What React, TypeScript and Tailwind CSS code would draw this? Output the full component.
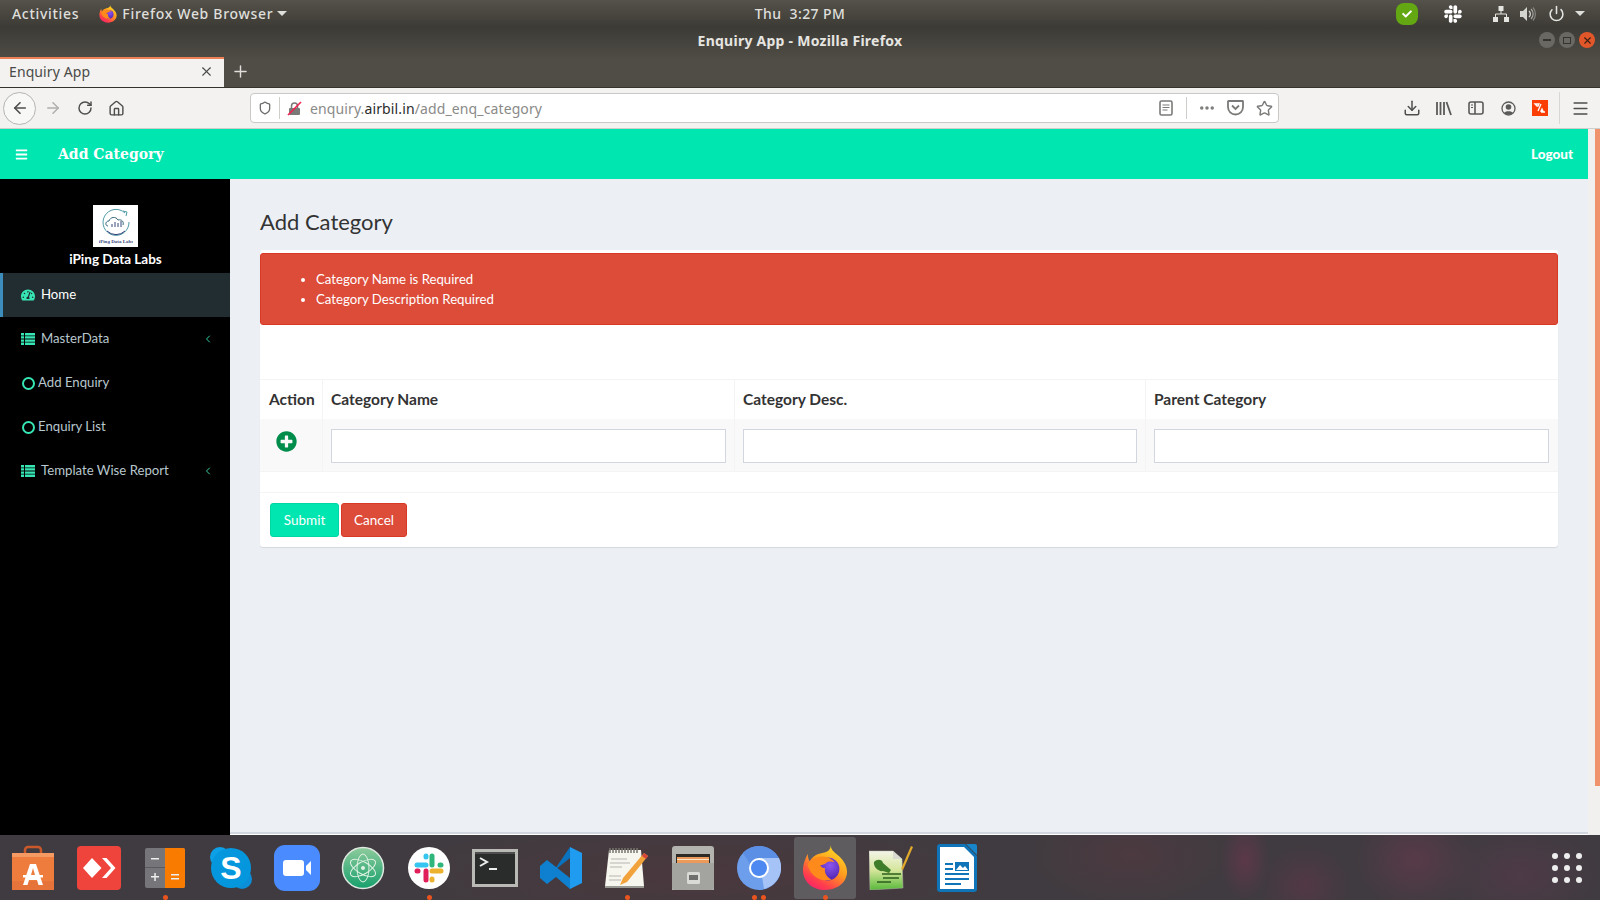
import React from "react";
import { FaBars, FaTachometerAlt, FaPlusCircle, FaSlack, FaCheck } from "react-icons/fa";
import { ArrowLeft, ArrowRight, RotateCw, House, Shield, X, Plus, Ellipsis, Star, Download, Menu, Power, ChevronLeft } from "lucide-react";

const ui = "font-['Noto_Sans',sans-serif]";
const page = "font-['Lato',sans-serif]";

function Firefox({ size }: { size: number }) {
  return (
    <svg width={size} height={size} viewBox="0 0 48 48">
      <defs>
        <linearGradient id="ffa" x1="0.8" y1="0" x2="0.2" y2="1">
          <stop offset="0" stopColor="#ffe226" />
          <stop offset="0.45" stopColor="#ff9a1f" />
          <stop offset="0.8" stopColor="#ff3d4d" />
          <stop offset="1" stopColor="#f5206e" />
        </linearGradient>
        <radialGradient id="ffb" cx="0.6" cy="0.35" r="0.7">
          <stop offset="0" stopColor="#8c55f0" />
          <stop offset="1" stopColor="#4a1fa8" />
        </radialGradient>
      </defs>
      <path d="M30 0c0 6 5 8 9 12 5 5 8 10 8 16 0 11-10 19-23 19C11 47 1 38 1 26 1 20 3 15 6 9c0 4 1 6 2 8 2-4 6-7 10-8 6-1 12-2 12-9z" fill="url(#ffa)" />
      <circle cx="27" cy="25" r="12" fill="url(#ffb)" />
      <path d="M6 20c3-5 9-8 15-8 6 0 11 3 13 6-3-1-7-1-9 1-2 1-3 2-6 2 1 2 3 3 5 3-1 5 2 10 7 12-9 3-19-2-23-10-1-2-2-4-2-6z" fill="#ff8a1c" />
    </svg>
  );
}

function SoftwareIcon() {
  return (
    <svg width="44" height="46" viewBox="0 0 44 46">
      <path d="M14 10V5a3 3 0 0 1 3-3h10a3 3 0 0 1 3 3v5" fill="none" stroke="#c9592a" strokeWidth="2.5" />
      <rect x="1" y="8" width="42" height="37" fill="#ee7d3d" />
      <rect x="1" y="8" width="42" height="4" fill="#f59a63" />
      <rect x="1" y="36" width="42" height="9" fill="#e5733a" />
      <path d="M19 19h6l7 21h-4.500l-1.500-5h-8l-1.500 5H12zM20 30h4l-2-7z" fill="#fff" />
      <rect x="12" y="30" width="20" height="2.5" fill="#fff" />
    </svg>
  );
}
function AnyDeskIcon() {
  return (
    <svg width="44" height="44" viewBox="0 0 44 44">
      <rect width="44" height="44" rx="4" fill="#ef443b" />
      <path d="M15 12l9.500 10L15 32 6 22z" fill="#fff" />
      <path d="M25 12l9 10-9 10h4.500l9-10-9-10z" fill="#fff" />
    </svg>
  );
}
function CalcIcon() {
  return (
    <svg width="40" height="40" viewBox="0 0 40 40">
      <rect width="40" height="40" rx="2" fill="#76767a" />
      <path d="M20 0h18a2 2 0 0 1 2 2v36a2 2 0 0 1-2 2H20z" fill="#f97c00" />
      <rect y="19" width="20" height="1" fill="#5b5b5f" />
      <path d="M6 10h8v1.500H6zM6 28h8v1.500H6zM9.300 25h1.500v8H9.300zM26 26h8v1.500h-8zM26 30h8v1.500h-8z" fill="#eee" />
    </svg>
  );
}
function SkypeIcon() {
  return (
    <svg width="44" height="44" viewBox="0 0 44 44">
      <circle cx="11" cy="11" r="10" fill="#0ea0e6" />
      <circle cx="33" cy="33" r="10" fill="#0b8fd8" />
      <circle cx="22" cy="22" r="20" fill="#0597dd" />
      <text x="22" y="33" textAnchor="middle" fontFamily="Liberation Sans, sans-serif" fontWeight="700" fontSize="32" fill="#fff">S</text>
    </svg>
  );
}
function ZoomIcon() {
  return (
    <svg width="46" height="46" viewBox="0 0 46 46">
      <rect width="46" height="46" rx="11" fill="#4a8cff" />
      <rect x="9" y="15" width="21" height="16" rx="3" fill="#fff" />
      <path d="M32 21l5-5v14l-5-5z" fill="#fff" />
    </svg>
  );
}
function AtomIcon() {
  return (
    <svg width="44" height="44" viewBox="0 0 44 44">
      <defs>
        <linearGradient id="atm" x1="0" y1="0" x2="0" y2="1">
          <stop offset="0" stopColor="#8ecb9c" />
          <stop offset="1" stopColor="#16a06c" />
        </linearGradient>
      </defs>
      <circle cx="22" cy="22" r="20.500" fill="url(#atm)" stroke="#dfe8e0" strokeWidth="1.500" />
      <g fill="none" stroke="#e3f3e6" strokeWidth="1">
        <ellipse cx="22" cy="22" rx="14" ry="6" transform="rotate(30 22 22)" />
        <ellipse cx="22" cy="22" rx="14" ry="6" transform="rotate(-30 22 22)" />
        <ellipse cx="22" cy="22" rx="14" ry="6" transform="rotate(90 22 22)" />
      </g>
      <circle cx="22" cy="22" r="2" fill="#e3f3e6" />
    </svg>
  );
}
function SlackIcon() {
  return (
    <svg width="42" height="42" viewBox="0 0 42 42">
      <circle cx="21" cy="21" r="21" fill="#fff" />
      <g strokeWidth="5" strokeLinecap="round" fill="none">
        <path d="M9 18h9" stroke="#36c5f0" />
        <path d="M18 9v1" stroke="#36c5f0" />
        <path d="M24 9v9" stroke="#2eb67d" />
        <path d="M33 18h-1" stroke="#2eb67d" />
        <path d="M24 24h9" stroke="#ecb22e" />
        <path d="M24 33v-1" stroke="#ecb22e" />
        <path d="M18 24v9" stroke="#e01e5a" />
        <path d="M9 24h1" stroke="#e01e5a" />
      </g>
    </svg>
  );
}
function TerminalIcon() {
  return (
    <svg width="46" height="38" viewBox="0 0 46 38">
      <rect width="46" height="38" fill="#b9b9b6" />
      <rect x="3" y="3" width="40" height="32" fill="#2a2b2b" />
      <rect x="3" y="3" width="40" height="2" fill="#4d4e4d" />
      <path d="M8 9l7 4-7 4" fill="none" stroke="#eee" strokeWidth="2" />
      <rect x="17" y="19" width="8" height="2" fill="#eee" />
    </svg>
  );
}
function VSCodeIcon() {
  return (
    <svg width="44" height="44" viewBox="0 0 44 44">
      <path d="M31 1l12 6v30l-12 6z" fill="#1f9cf0" />
      <path d="M31 1v11L16 24l-8 6-7-6 7-6 8 5z" fill="#0b72bd" />
      <path d="M1 20l7-6 23 18v11l-14-12-9 7-7-6z" fill="#0f80cf" />
    </svg>
  );
}
function GeditIcon() {
  return (
    <svg width="46" height="44" viewBox="0 0 46 44">
      <path d="M5 4h32l3 36H1z" fill="#f6f5ee" />
      <path d="M1 40h39v2H1z" fill="#9a9a94" />
      <path d="M6 2v5M9 2v5M12 2v5M15 2v5M18 2v5M21 2v5M24 2v5M27 2v5M30 2v5M33 2v5" stroke="#77776f" strokeWidth="1.500" />
      <path d="M7 13h16M6 17h20M6 21h12M5 30h12M5 34h12" stroke="#b5b5b0" strokeWidth="1.200" />
      <path d="M40 7l4 3-21 26-7 3 3-7z" fill="#f2a23a" />
      <path d="M40 7l4 3-2 3-4-3z" fill="#d8453a" />
    </svg>
  );
}
function FilesIcon() {
  return (
    <svg width="42" height="44" viewBox="0 0 42 44">
      <path d="M0 3a3 3 0 0 1 3-3h36a3 3 0 0 1 3 3v41H0z" fill="#b3b3b0" />
      <rect x="4" y="8" width="34" height="10" fill="#2d2a26" />
      <rect x="5" y="11" width="32" height="6" fill="#ec9a5b" />
      <rect x="5" y="13" width="32" height="1" fill="#fbe5c5" />
      <path d="M0 17h42v24a3 3 0 0 1-3 3H3a3 3 0 0 1-3-3z" fill="#a3a3a0" />
      <rect x="15" y="26" width="13" height="12" rx="1.500" fill="#d9d9d6" />
      <rect x="17" y="29" width="9" height="5" fill="#6f6f6d" />
    </svg>
  );
}
function ChromiumIcon() {
  return (
    <svg width="44" height="44" viewBox="0 0 44 44">
      <circle cx="22" cy="22" r="22" fill="#6d9eeb" />
      <path d="M22 12h20a22 22 0 0 1-15 31z" fill="#a5c3f7" />
      <path d="M22 0a22 22 0 0 1 20 12H22a10 10 0 0 0-9 6L6 7A22 22 0 0 1 22 0z" fill="#5b8fe6" />
      <circle cx="22" cy="22" r="10" fill="#fff" />
      <circle cx="22" cy="22" r="8" fill="#4d89f0" />
    </svg>
  );
}
function NotepadqqIcon() {
  return (
    <svg width="44" height="44" viewBox="0 0 44 44">
      <defs>
        <linearGradient id="nq" x1="0" y1="0" x2="0" y2="1">
          <stop offset="0" stopColor="#f4f5e8" />
          <stop offset="0.5" stopColor="#d4e59a" />
          <stop offset="1" stopColor="#58b93a" />
        </linearGradient>
      </defs>
      <path d="M0 5h24l9 8 1 29-33 2z" fill="url(#nq)" stroke="#b9b9b0" strokeWidth="0.500" />
      <path d="M24 5v8h9z" fill="#d9d9d0" />
      <path d="M5 16c3-3 8-3 9 1l8 7-2 3-6-2c-4 1-10-4-9-9z" fill="#3f7d2a" />
      <path d="M13 28h19M14 32h16M8 36h14" stroke="#2c5e1c" strokeWidth="1.500" />
      <path d="M42 0l2 1-10 23-2-1z" fill="#e3a92a" />
    </svg>
  );
}
function WriterIcon() {
  return (
    <svg width="40" height="48" viewBox="0 0 40 48">
      <path d="M3 0h25l12 12v33a3 3 0 0 1-3 3H3a3 3 0 0 1-3-3V3a3 3 0 0 1 3-3z" fill="#0f75b8" />
      <path d="M3 3h24l10 10v32H3z" fill="#fff" />
      <path d="M29 0l11 11V2a2 2 0 0 0-2-2z" fill="#1685c9" />
      <path d="M8 19h8v2H8zM8 24h8v2H8zM8 29h24v2H8zM8 34h24v2H8zM8 39h16v2H8z" fill="#0f75b8" />
      <rect x="18" y="18" width="14" height="9" fill="#0f75b8" />
      <path d="M19 26l4-5 3 3 2-2 3 4z" fill="#fff" />
    </svg>
  );
}

function ListIcon() {
  return (
    <svg width="14" height="12" viewBox="0 0 14 12" fill="#36e6b4">
      <path d="M0 0h3v2.400H0zM4 0h10v2.400H4zM0 3.200h3v2.400H0zM4 3.200h10v2.400H4zM0 6.400h3v2.400H0zM4 6.400h10v2.400H4zM0 9.600h3V12H0zM4 9.600h10V12H4z" />
    </svg>
  );
}

function Logo() {
  return (
    <div className="w-[45px] h-[42px] bg-white flex flex-col items-center justify-start pt-[2px]">
      <svg width="34" height="30" viewBox="0 0 34 30">
        <path d="M26 6a13 13 0 1 0 4 9" fill="none" stroke="#4d9aa6" strokeWidth="1" />
        <path d="M24 4l4 1-1 4" fill="none" stroke="#4d9aa6" strokeWidth="1" />
        <path d="M9 19c-3 0-3-5 1-5 1-4 7-5 9-1 4-1 6 2 5 5" fill="none" stroke="#35687a" strokeWidth="1" />
        <path d="M13 20v-3M16 20v-5M19 20v-4M22 20v-6" stroke="#35487a" strokeWidth="1" />
        <path d="M8 24a13 13 0 0 0 18 0" fill="none" stroke="#33407a" strokeWidth="1" />
      </svg>
      <svg width="34" height="7" viewBox="0 0 34 7">
        <text x="17" y="5.500" textAnchor="middle" fontFamily="Liberation Serif, serif" fontSize="5" fontWeight="700" fill="#3d4a80">iPing Data Labs</text>
      </svg>
    </div>
  );
}

const menu = [
  { label: "Home", icon: "gauge", active: true },
  { label: "MasterData", icon: "list", chevron: true },
  { label: "Add Enquiry", icon: "circle" },
  { label: "Enquiry List", icon: "circle" },
  { label: "Template Wise Report", icon: "list", chevron: true },
];

const dock = [
  { el: <SoftwareIcon /> },
  { el: <AnyDeskIcon /> },
  { el: <CalcIcon />, dots: 1 },
  { el: <SkypeIcon /> },
  { el: <ZoomIcon /> },
  { el: <AtomIcon /> },
  { el: <SlackIcon />, dots: 1 },
  { el: <TerminalIcon /> },
  { el: <VSCodeIcon /> },
  { el: <GeditIcon />, dots: 1 },
  { el: <FilesIcon /> },
  { el: <ChromiumIcon />, dots: 2 },
  { el: <Firefox size={46} />, dots: 1, active: true },
  { el: <NotepadqqIcon /> },
  { el: <WriterIcon /> },
];

function Slot({ children, w = "w-[32px]" }: { children: React.ReactNode; w?: string }) {
  return <div className={`${w} h-[32px] flex items-center justify-center shrink-0`}>{children}</div>;
}

export default function App() {
  return (
    <div className="w-[1600px] h-[900px] flex flex-col overflow-hidden bg-[#ecf0f5]">
      <div className={`h-[88px] shrink-0 flex flex-col bg-[linear-gradient(#55524b_0px,#3d3b35_27px,#44423c_40px,#504d46_60px,#504d46_88px)] border-b border-[#35332e] ${ui}`}>
        <div className="h-[27px] grid grid-cols-[1fr_auto_1fr] items-center text-[14px] font-medium text-[#dfdfdb]">
          <div className="flex items-center tracking-[0.7px]">
            <span className="ml-[12px]">Activities</span>
            <span className="ml-[20px] flex"><Firefox size={18} /></span>
            <span className="ml-[5px]">Firefox Web Browser</span>
            <span className="ml-[4px] w-0 h-0 border-x-[5px] border-x-transparent border-t-[5px] border-t-[#dfdfdb]" />
          </div>
          <div className="whitespace-pre tracking-[0.4px]">Thu  3:27 PM</div>
          <div className="flex items-center justify-end pr-[15px]">
            <span className="w-[22px] h-[22px] rounded-[8px] bg-[#63a812] flex items-center justify-center text-white"><FaCheck size={10} /></span>
            <span className="ml-[25px] flex text-white"><FaSlack size={20} /></span>
            <span className="ml-[30px] flex">
              <svg width="16" height="16" viewBox="0 0 16 16"><path d="M5.500 0h5v5h-5zM0 11h5v5H0zM11 11h5v5h-5z" fill="#e4e4e0" /><path d="M8 5v3M2.500 11V8h11v3" fill="none" stroke="#e4e4e0" strokeWidth="1" /></svg>
            </span>
            <span className="ml-[11px] flex">
              <svg width="16" height="16" viewBox="0 0 16 16"><path d="M0 5h3l4-4v14l-4-4H0z" fill="#d5d5d0" /><path d="M9 5a4 4 0 0 1 0 6" fill="none" stroke="#d5d5d0" strokeWidth="1.300" /><path d="M11 3a7 7 0 0 1 0 10" fill="none" stroke="#a9a8a3" strokeWidth="1.200" /><path d="M13 1.500a10 10 0 0 1 0 13" fill="none" stroke="#85847f" strokeWidth="1.200" /></svg>
            </span>
            <span className="ml-[12px] flex text-[#e4e4e0]"><Power size={17} strokeWidth={2.200} /></span>
            <span className="ml-[10px] w-0 h-0 border-x-[5px] border-x-transparent border-t-[5px] border-t-[#dfdfdb]" />
          </div>
        </div>
        <div className="h-[30px] grid grid-cols-[1fr_auto_1fr] items-center">
          <div />
          <div className="text-[14px] font-bold text-[#e6e5e1] tracking-[0.25px] pb-[4px]">Enquiry App - Mozilla Firefox</div>
          <div className="flex justify-end gap-[4px] pr-[5px] pb-[4px]">
            <span className="w-[16px] h-[16px] rounded-full bg-[#6a6862] flex items-center justify-center"><span className="w-[8px] h-[1.500px] bg-[#35332e]" /></span>
            <span className="w-[16px] h-[16px] rounded-full bg-[#6a6862] flex items-center justify-center"><span className="w-[8px] h-[7px] border border-[#35332e]" /></span>
            <span className="w-[16px] h-[16px] rounded-full bg-[#e2572a] flex items-center justify-center text-[#3d2015]"><X size={11} strokeWidth={2.500} /></span>
          </div>
        </div>
        <div className="flex-1 flex items-stretch">
          <div className="w-[224px] bg-[#f3f2f0] border-t-[2px] border-t-[#ef7f55] flex items-center justify-between pl-[9px] pr-[10px] pb-[3px] text-[14px] text-[#4a4a48] tracking-[0.1px]">
            <span>Enquiry App</span>
            <X size={15} strokeWidth={1.800} />
          </div>
          <div className="w-[32px] flex items-center justify-center pb-[2px] text-[#e0dfdb]"><Plus size={19} strokeWidth={1.800} /></div>
        </div>
      </div>

      <div className={`h-[40px] shrink-0 bg-[#f3f2f0] border-b border-[#cfcecb] flex items-center text-[#4e4e4c] box-content ${ui}`}>
        <div className="ml-[3px] w-[33px] h-[33px] rounded-full border border-[#b5b4b2] bg-[#f8f8f7] flex items-center justify-center shrink-0"><ArrowLeft size={18} strokeWidth={2.200} /></div>
        <div className="ml-[1px]"><Slot><ArrowRight size={18} strokeWidth={2} className="text-[#b0afad]" /></Slot></div>
        <Slot><RotateCw size={16} strokeWidth={2.200} /></Slot>
        <div className="ml-[-1px]"><Slot><House size={17} strokeWidth={2} /></Slot></div>
        <div className="ml-[118px] w-[1029px] h-[30px] shrink-0 bg-white border border-[#c9c8c6] rounded-[4px] flex items-center">
          <div className="ml-[5px]"><Slot w="w-[18px]"><Shield size={14} strokeWidth={2.200} className="text-[#6b6b69]" /></Slot></div>
          <div className="ml-[5px] w-px h-[22px] bg-[#cfcecb]" />
          <div className="ml-[6px] w-[16px] h-[16px] flex items-center justify-center">
            <svg width="15" height="15" viewBox="0 0 15 15">
              <rect x="2" y="7" width="11" height="7" rx="1" fill="#7a7a78" />
              <path d="M4.500 7V5a3 3 0 0 1 6 0v2" fill="none" stroke="#7a7a78" strokeWidth="1.500" />
              <path d="M1 14L14 1" stroke="#f1224e" strokeWidth="1.600" />
            </svg>
          </div>
          <div className="ml-[8px] text-[14px] text-[#8a8a88] tracking-[0.12px]">enquiry.<span className="text-[#2b2b2b]">airbil.in</span>/add_enq_category</div>
          <div className="flex-1" />
          <Slot w="w-[16px]">
            <svg width="14" height="16" viewBox="0 0 14 16"><rect x="1" y="1" width="12" height="14" rx="1.500" fill="none" stroke="#7a7a78" strokeWidth="1.600" /><path d="M3.500 5h7M3.500 7.500h7M3.500 10h5" stroke="#7a7a78" strokeWidth="1.200" /></svg>
          </Slot>
          <div className="ml-[12px] w-px h-[22px] bg-[#cfcecb]" />
          <div className="ml-[10px] flex"><Slot w="w-[20px]"><Ellipsis size={18} strokeWidth={2.600} className="text-[#7a7a78]" /></Slot></div>
          <div className="ml-[9px]">
            <Slot w="w-[18px]">
              <svg width="17" height="16" viewBox="0 0 17 16"><path d="M1.500 1h14a0.500 0.500 0 0 1 0.500 0.500V7a7.500 7.500 0 0 1-15 0V1.500A0.500 0.500 0 0 1 1.500 1z" fill="none" stroke="#7a7a78" strokeWidth="1.800" /><path d="M5 5.500l3.500 3.500L12 5.500" fill="none" stroke="#7a7a78" strokeWidth="1.800" /></svg>
            </Slot>
          </div>
          <div className="ml-[11px] mr-[5px]"><Slot w="w-[18px]"><Star size={17} strokeWidth={2} className="text-[#7a7a78]" /></Slot></div>
        </div>
        <div className="ml-[117px]"><Slot><Download size={18} strokeWidth={2} /></Slot></div>
        <Slot>
          <svg width="16" height="15" viewBox="0 0 16 15"><path d="M1 1v13M4.500 1v13M8 1v13M10.500 1l4.500 13" stroke="#5a5a58" strokeWidth="1.800" fill="none" /></svg>
        </Slot>
        <Slot>
          <svg width="16" height="14" viewBox="0 0 16 14"><rect x="1" y="1" width="14" height="12" rx="2" fill="none" stroke="#5a5a58" strokeWidth="1.600" /><path d="M7 1v12" stroke="#5a5a58" strokeWidth="1.600" /><path d="M3 4h2M3 6.500h2" stroke="#5a5a58" strokeWidth="1.200" /></svg>
        </Slot>
        <Slot>
          <svg width="15" height="15" viewBox="0 0 15 15"><circle cx="7.500" cy="7.500" r="6.500" fill="none" stroke="#5a5a58" strokeWidth="1.300" /><circle cx="7.500" cy="6" r="2.800" fill="#5a5a58" /><path d="M3 12c1-2.500 8-2.500 9 0l-2 1.500H5z" fill="#5a5a58" /></svg>
        </Slot>
        <Slot>
          <svg width="16" height="16" viewBox="0 0 16 16"><rect width="16" height="16" fill="#fa3e06" /><path d="M3 4h4l-1 2H5zM6 11l3-7M10 9l1 2h-2zM13 12H9" stroke="#fff" strokeWidth="1.300" fill="none" /></svg>
        </Slot>
        <div className="ml-[3px] w-px h-[32px] bg-[#d8d7d5]" />
        <div className="ml-[4px]"><Slot><Menu size={19} strokeWidth={2} /></Slot></div>
      </div>

      <div className="flex-1 min-h-0 flex">
        <div className={`w-[1588px] flex flex-col ${page}`}>
          <header className="h-[50px] shrink-0 bg-[#00e6b0] flex items-center text-white">
            <span className="ml-[15px] flex"><FaBars size={13} /></span>
            <span className="ml-[30px] font-['DejaVu_Serif',serif] font-bold text-[14px]">Add Category</span>
            <span className="ml-auto mr-[15px] pt-[1px] text-[13.500px] font-black">Logout</span>
          </header>
          <div className="flex-1 min-h-0 flex">
            <aside className="w-[230px] bg-black shrink-0 flex flex-col">
              <div className="h-[94px] flex flex-col items-center pt-[26px] pl-[1px]">
                <Logo />
                <div className="mt-[3px] text-[13.500px] font-bold text-white leading-[18px]">iPing Data Labs</div>
              </div>
              {menu.map((m) => (
                <div key={m.label} className={`h-[44px] flex items-center text-[13.200px] ${m.active ? "bg-[#222d32] border-l-[3px] border-l-[#3c8dbc] text-white" : "text-[#b8c7ce]"}`}>
                  <span className={`flex text-[#36e6b4] ${m.active ? "ml-[18px]" : m.icon === "circle" ? "ml-[22px]" : "ml-[21px]"}`}>
                    {m.icon === "gauge" && <FaTachometerAlt size={14} />}
                    {m.icon === "list" && <ListIcon />}
                    {m.icon === "circle" && <span className="w-[13px] h-[13px] rounded-full border-[2px] border-[#36e6b4]" />}
                  </span>
                  <span className={m.icon === "circle" ? "ml-[3px]" : "ml-[6px]"}>{m.label}</span>
                  {m.chevron && <span className="ml-auto mr-[16px] flex text-[#36e6b4]"><ChevronLeft size={12} strokeWidth={1.800} /></span>}
                </div>
              ))}
            </aside>
            <main className="flex-1 min-w-0 flex flex-col">
              <div className="flex-1 pl-[30px] pr-[30px] pt-[28px]">
                <h1 className="text-[22px] leading-[30px] text-[#333]">Add Category</h1>
                <div className="mt-[13px] w-[1298px] bg-white rounded-[3px] shadow-[0_1px_1px_rgba(0,0,0,0.1)] pt-[3px]">
                  <div className="h-[72px] bg-[#dd4b39] border border-[#d73925] rounded-[3px] text-white text-[13.200px] leading-[20px] pt-[15px] pl-[55px]">
                    <ul className="list-disc">
                      <li>Category Name is Required</li>
                      <li>Category Description Required</li>
                    </ul>
                  </div>
                  <div className="mt-[54px] grid grid-cols-[62px_412px_411px_413px]">
                    {["Action", "Category Name", "Category Desc.", "Parent Category"].map((h, i) => (
                      <div key={h} className={`h-[40px] flex items-center text-[15.500px] font-bold text-[#333] border-t border-[#f4f4f4] ${i ? "pl-[8px] border-l" : "pl-[9px]"}`}>{h}</div>
                    ))}
                    <div className="h-[53px] bg-[#f9f9f9] border-b border-[#f4f4f4] pt-[12px] pl-[16px] text-[#008d4c]"><FaPlusCircle size={21} /></div>
                    {[0, 1, 2].map((i) => (
                      <div key={i} className={`h-[53px] bg-[#f9f9f9] border-b border-l border-[#f4f4f4] pt-[10px] pl-[8px] ${i === 2 ? "pr-[9px]" : "pr-[8px]"}`}>
                        <div className="h-[34px] bg-white border border-[#d2d6de]" />
                      </div>
                    ))}
                  </div>
                  <div className="mt-[20px] border-t border-[#f4f4f4] h-[55px] pt-[10px] pl-[10px] flex gap-[2px] text-[13.500px]">
                    <div className="w-[69px] h-[34px] bg-[#00e6b0] border border-[#00d6a3] rounded-[3px] text-white flex items-center justify-center">Submit</div>
                    <div className="w-[66px] h-[34px] bg-[#dd4b39] border border-[#d73925] rounded-[3px] text-white flex items-center justify-center">Cancel</div>
                  </div>
                </div>
              </div>
            </main>
          </div>
          <div className="h-[3px] shrink-0 flex">
            <div className="w-[230px] bg-black" />
            <div className="flex-1 border-t-[2px] border-t-[#d2d6de] bg-white" />
          </div>
        </div>
        <div className="w-[12px] shrink-0 bg-[#f1f0ee] flex justify-end">
          <div className="w-[5px] h-[657px] bg-[#f0926c]" />
        </div>
      </div>

      <div className="h-[65px] shrink-0 flex items-stretch bg-[#403b40] bg-[radial-gradient(ellipse_25px_40px_at_1245px_25px,#5c3848_0px,transparent_100%),radial-gradient(ellipse_45px_40px_at_1305px_50px,#523845_0px,transparent_100%),radial-gradient(ellipse_60px_50px_at_1415px_25px,#583a48_0px,transparent_100%),radial-gradient(ellipse_80px_50px_at_1520px_40px,#4e3a48_0px,transparent_100%),radial-gradient(ellipse_300px_60px_at_700px_40px,#4a383d_0px,transparent_100%),radial-gradient(ellipse_100px_50px_at_1130px_20px,#4c3a40_0px,transparent_100%)]">
        {dock.map((d, i) => (
          <div key={i} className="w-[66px] shrink-0 flex flex-col items-center">
            <div className={`w-[62px] h-[62px] mt-[2px] rounded-[3px] flex items-center justify-center ${d.active ? "bg-[#5f5c60]" : ""}`}>{d.el}</div>
            <div className="mt-[-4px] h-[5px] flex gap-[4px]">
              {Array.from({ length: d.dots ?? 0 }).map((_, k) => (
                <span key={k} className="w-[5px] h-[5px] rounded-full bg-[#e9541f]" />
              ))}
            </div>
          </div>
        ))}
        <div className="ml-[562px] mt-[18px] grid grid-cols-[6px_6px_6px] auto-rows-[6px] gap-[6px]">
          {Array.from({ length: 9 }).map((_, i) => (
            <span key={i} className="w-[6px] h-[6px] rounded-full bg-[#eeeeee]" />
          ))}
        </div>
      </div>
    </div>
  );
}
